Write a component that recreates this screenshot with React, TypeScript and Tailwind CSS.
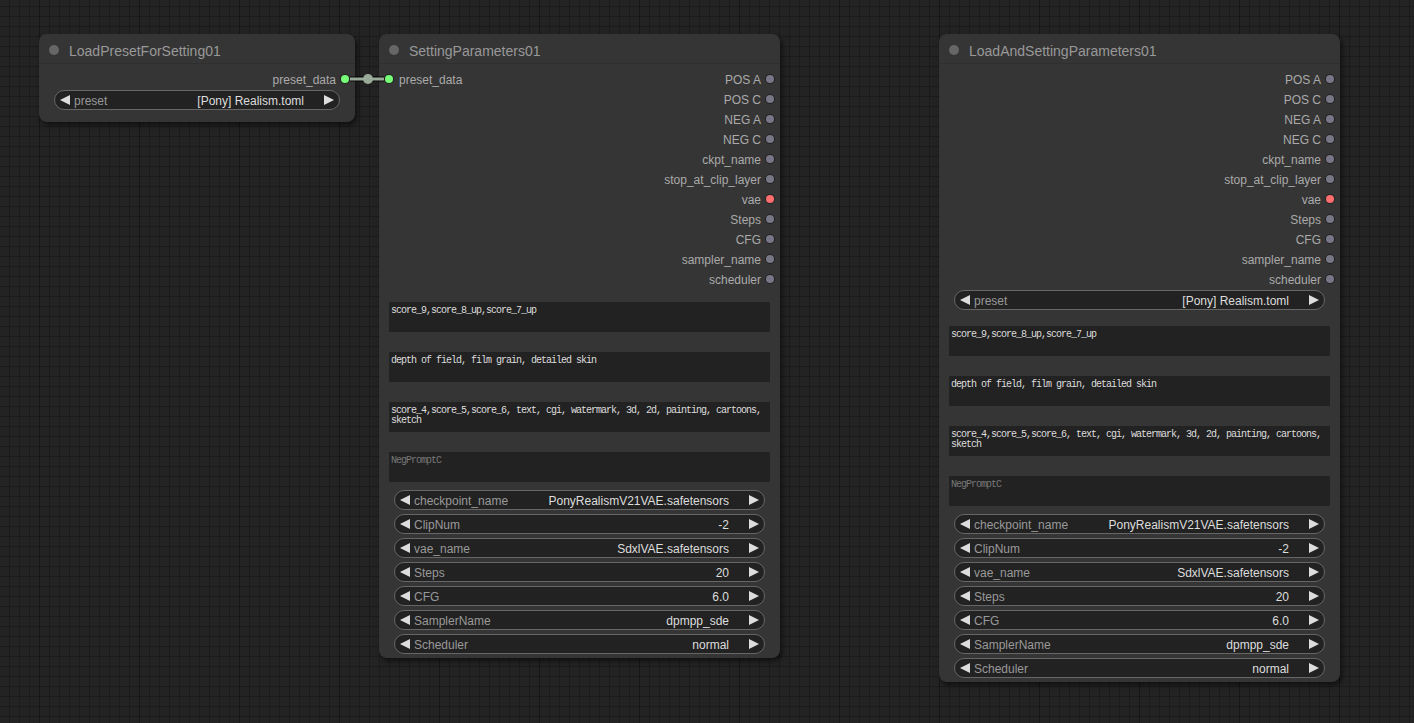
import React from "react";

type Slot = { label: string; color?: string };

const OUTPUTS: Slot[] = [
  { label: "POS A" },
  { label: "POS C" },
  { label: "NEG A" },
  { label: "NEG C" },
  { label: "ckpt_name" },
  { label: "stop_at_clip_layer" },
  { label: "vae", color: "red" },
  { label: "Steps" },
  { label: "CFG" },
  { label: "sampler_name" },
  { label: "scheduler" },
];

const COMBOS: [string, string][] = [
  ["checkpoint_name", "PonyRealismV21VAE.safetensors"],
  ["ClipNum", "-2"],
  ["vae_name", "SdxlVAE.safetensors"],
  ["Steps", "20"],
  ["CFG", "6.0"],
  ["SamplerName", "dpmpp_sde"],
  ["Scheduler", "normal"],
];

function Dot({ kind }: { kind?: string }) {
  const cls =
    kind === "green"
      ? "bg-[#7f7]"
      : kind === "red"
      ? "bg-[#ff6e6e]"
      : "bg-[#778]";
  return (
    <span
      className={`block w-[8px] h-[8px] rounded-full ${cls} shadow-[0_0_0_1px_rgba(0,0,0,0.35)]`}
    />
  );
}

function Arrow({ dir }: { dir: "left" | "right" }) {
  return (
    <svg width="10" height="10" viewBox="0 0 10 10" className="shrink-0">
      {dir === "left" ? (
        <polygon points="10,0 0,5 10,10" fill="#ddd" />
      ) : (
        <polygon points="0,0 10,5 0,10" fill="#ddd" />
      )}
    </svg>
  );
}

function Combo({ label, value }: { label: string; value: string }) {
  return (
    <div className="mx-[15px] mb-[4px] h-[20px] rounded-full border border-[#666] bg-[#222] flex items-center pl-[5px] pr-[5px] text-[12px] leading-none">
      <Arrow dir="left" />
      <span className="ml-[4px] pt-[2px] text-[#999]">{label}</span>
      <span className="flex-1" />
      <span className="pt-[2px] text-[#ddd]">{value}</span>
      <span className="w-[20px]" />
      <Arrow dir="right" />
    </div>
  );
}

function TextBox({ text, placeholder }: { text?: React.ReactNode; placeholder?: string }) {
  return (
    <div className="pt-[12px] pb-[8px] px-[10px]">
      <div className="h-[30px] bg-[#222] px-[2px] pt-[4px] font-['Liberation_Mono',monospace] text-[10px] leading-[10px] tracking-[-1px] whitespace-nowrap overflow-hidden">
        {text ? (
          <span className="text-[#ddd]">{text}</span>
        ) : (
          <span className="text-[#777]">{placeholder}</span>
        )}
      </div>
    </div>
  );
}

function OutputRow({ slot }: { slot: Slot }) {
  return (
    <div className="h-[20px] flex items-center justify-end">
      <span className="pt-[2px] text-[12px] text-[#aaa] leading-none">{slot.label}</span>
      <span className="ml-[5px] mr-[6px]">
        <Dot kind={slot.color} />
      </span>
    </div>
  );
}

function Node({
  title,
  left,
  width,
  children,
}: {
  title: string;
  left: string;
  width: string;
  children: React.ReactNode;
}) {
  return (
    <div
      className={`absolute top-[34px] ${left} ${width} rounded-[8px] bg-[#353535] shadow-[2px_3px_5px_rgba(0,0,0,0.55)]`}
    >
      <div className="h-[30px] flex items-center border-b border-[#2f2f2f]">
        <span className="ml-[10px] mt-[2px] w-[10px] h-[10px] rounded-full bg-[#666]" />
        <span className="ml-[10px] pt-[4px] text-[14px] text-[#999] leading-none">{title}</span>
      </div>
      {children}
    </div>
  );
}

const TEXTS = (
  <>
    <TextBox text="score_9,score_8_up,score_7_up" />
    <TextBox text="depth of field, film grain, detailed skin" />
    <TextBox
      text={
        <>
          score_4,score_5,score_6, text, cgi, watermark, 3d, 2d, painting, cartoons,
          <br />
          sketch
        </>
      }
    />
    <TextBox placeholder="NegPromptC" />
  </>
);

export default function App() {
  return (
    <div className="relative w-[1414px] h-[723px] overflow-hidden bg-[#232323] font-['Liberation_Sans',Arial,sans-serif] [background-image:linear-gradient(to_right,#171717_1px,transparent_1px),linear-gradient(to_right,#1b1b1b_1px,transparent_1px),linear-gradient(to_bottom,#1b1b1b_1px,transparent_1px)] [background-size:100px_100px,10px_10px,10px_10px] [background-position:39px_0,9px_6px,9px_6px]">
      {/* Node 1 */}
      <Node title="LoadPresetForSetting01" left="left-[39px]" width="w-[316px]">
        <div className="pt-[5px] pb-[1px]">
          <OutputRow slot={{ label: "preset_data", color: "green" }} />
        </div>
        <div className="pb-[8px]">
          <Combo label="preset" value="[Pony] Realism.toml" />
        </div>
      </Node>

      {/* Node 2 */}
      <Node title="SettingParameters01" left="left-[379px]" width="w-[401px]">
        <div className="pt-[5px] pb-[1px] relative">
          <div className="absolute left-0 top-[5px] h-[20px] flex items-center">
            <span className="ml-[6px]">
              <Dot kind="green" />
            </span>
            <span className="ml-[6px] pt-[2px] text-[12px] text-[#aaa] leading-none">preset_data</span>
          </div>
          {OUTPUTS.map((s) => (
            <OutputRow key={s.label} slot={s} />
          ))}
        </div>
        {TEXTS}
        {COMBOS.map(([l, v]) => (
          <Combo key={l} label={l} value={v} />
        ))}
      </Node>

      {/* Node 3 */}
      <Node title="LoadAndSettingParameters01" left="left-[939px]" width="w-[401px]">
        <div className="pt-[5px] pb-[1px]">
          {OUTPUTS.map((s) => (
            <OutputRow key={s.label} slot={s} />
          ))}
        </div>
        <Combo label="preset" value="[Pony] Realism.toml" />
        {TEXTS}
        {COMBOS.map(([l, v]) => (
          <Combo key={l} label={l} value={v} />
        ))}
      </Node>

      {/* Link */}
      <svg
        className="absolute left-0 top-0 pointer-events-none"
        width="1414"
        height="723"
        viewBox="0 0 1414 723"
      >
        <line x1="350" y1="79" x2="384" y2="79" stroke="#000" strokeWidth="5" strokeOpacity="0.8" />
        <line x1="350" y1="79" x2="384" y2="79" stroke="#9a9" strokeWidth="3" />
        <circle cx="368" cy="79" r="5" fill="#9a9" />
      </svg>
    </div>
  );
}
